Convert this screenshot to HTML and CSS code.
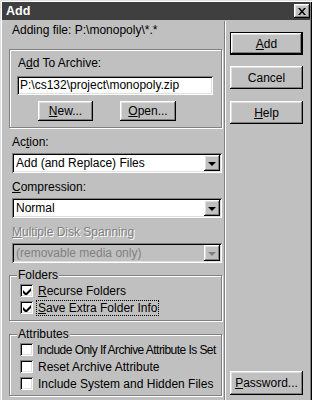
FILE: index.html
```html
<!DOCTYPE html>
<html lang="en">
<head>
  <meta charset="UTF-8" />
  <title>Add</title>
  <link rel="stylesheet" href="styles.css">
</head>
<body>

<div class="window">
  <div class="titlebar">
    <span class="title">Add</span>
    <span class="close">
      <svg width="8" height="7" viewBox="0 0 8 7"><path d="M0 0h2l2 2.5L6 0h2L5 3.5 8 7H6L4 4.5 2 7H0l3-3.5z" fill="#000"/></svg>
    </span>
  </div>

  <div class="main">
    <div class="panel">
      <div class="info">Adding file: P:\monopoly\*.*</div>

      <div class="box">
        <div class="box-label">A<u>d</u>d To Archive:</div>
        <div class="field">P:\cs132\project\monopoly.zip</div>
        <div class="box-buttons">
          <button class="btn btn-new"><u>N</u>ew...</button>
          <button class="btn btn-open"><u>O</u>pen...</button>
        </div>
      </div>

      <div class="field-label">Ac<u>t</u>ion:</div>
      <div class="combo">
        <span class="combo-text">Add (and Replace) Files</span>
        <span class="combo-arrow"><i class="tri"></i></span>
      </div>

      <div class="field-label"><u>C</u>ompression:</div>
      <div class="combo">
        <span class="combo-text">Normal</span>
        <span class="combo-arrow"><i class="tri"></i></span>
      </div>

      <div class="field-label disabled"><u>M</u>ultiple Disk Spanning</div>
      <div class="combo combo-disabled">
        <span class="combo-text">(removable media only)</span>
        <span class="combo-arrow"><i class="tri"></i></span>
      </div>

      <div class="group group-folders">
        <div class="legend">Folders</div>
        <div class="check-row">
          <span class="check checked"><svg width="8" height="8" viewBox="0 0 8 8"><path d="M0 3v3l2.5 2.5h1L8 4V1L3 6z" fill="#000"/></svg></span>
          <span class="check-text"><u>R</u>ecurse Folders</span>
        </div>
        <div class="check-row">
          <span class="check checked"><svg width="8" height="8" viewBox="0 0 8 8"><path d="M0 3v3l2.5 2.5h1L8 4V1L3 6z" fill="#000"/></svg></span>
          <span class="check-text focus"><u>S</u>ave Extra Folder Info</span>
        </div>
      </div>

      <div class="group group-attrs">
        <div class="legend">Attributes</div>
        <div class="check-row">
          <span class="check"></span>
          <span class="check-text tight">Include Only If Archive Attribute Is Set</span>
        </div>
        <div class="check-row">
          <span class="check"></span>
          <span class="check-text">Reset Archive Attribute</span>
        </div>
        <div class="check-row">
          <span class="check"></span>
          <span class="check-text">Include System and Hidden Files</span>
        </div>
      </div>
    </div>

    <div class="actions">
      <button class="btn btn-default"><u>A</u>dd</button>
      <button class="btn btn-cancel">Cancel</button>
      <button class="btn btn-help"><u>H</u>elp</button>
      <button class="btn btn-password"><u>P</u>assword...</button>
    </div>
  </div>
</div>

</body>
</html>
```

FILE: styles.css
```css
* {
  box-sizing: border-box;
}

body {
  margin: 0;
  background: #c0c0c0;
  font-family: "Liberation Sans", Arial, sans-serif;
  font-size: 12px;
  color: #000;
  white-space: nowrap;
}

u {
  text-decoration: underline;
  text-underline-offset: 1px;
}

.window {
  width: 312px;
  height: 420px;
  padding: 2px;
  background: #c0c0c0;
  box-shadow: inset 1px 1px #dfdfdf, inset 2px 2px #fff, inset -1px -1px #000, inset -2px -2px #808080;
  overflow: hidden;
}

/* title bar */
.titlebar {
  height: 18px;
  margin-bottom: 1px;
  padding: 0 0 0 4px;
  display: flex;
  align-items: center;
  justify-content: space-between;
  background: #3f3f3f;
}

.title {
  color: #fff;
  font-weight: bold;
  font-size: 12.5px;
}

.close {
  width: 16px;
  height: 14px;
  display: flex;
  align-items: center;
  justify-content: center;
  background: #c0c0c0;
  box-shadow: inset -1px -1px #000, inset 1px 1px #fff, inset -2px -2px #808080, inset 2px 2px #dfdfdf;
}

/* layout */
.main {
  display: flex;
}

.panel {
  width: 223px;
  padding: 2px 2px 6px 7px;
  border-right: 1px solid #808080;
  box-shadow: 1px 0 #fff;
}

.actions {
  width: 73px;
  margin-left: 5px;
  padding: 11px 0 7px;
  display: flex;
  flex-direction: column;
}

.info {
  height: 14px;
  line-height: 14px;
  margin-left: 3px;
}

/* archive box */
.box {
  margin: 12px 0 2px;
  padding: 6px 7px;
  border: 1px solid #808080;
  box-shadow: inset 1px 1px #fff, 1px 1px #fff;
}

.box-label {
  height: 14px;
  line-height: 14px;
  margin-left: 1px;
}

.field {
  width: 196px;
  height: 19px;
  margin-top: 6px;
  padding: 0 3px;
  line-height: 19px;
  background: #fff;
  box-shadow: inset 1px 1px #808080, inset -1px -1px #fff, inset 2px 2px #000, inset -2px -2px #dfdfdf;
}

.box-buttons {
  display: flex;
  margin-top: 6px;
}

/* buttons */
.btn {
  height: 23px;
  padding: 0;
  border: none;
  background: #c0c0c0;
  font: inherit;
  color: #000;
  box-shadow: inset -1px -1px #000, inset 1px 1px #fff, inset -2px -2px #808080, inset 2px 2px #dfdfdf;
}

.btn-new {
  width: 55px;
  height: 20px;
  margin-left: 21px;
}

.btn-open {
  width: 56px;
  height: 20px;
  margin-left: 27px;
}

.btn-default {
  border: 1px solid #000;
}

.btn-cancel {
  margin-top: 11px;
}

.btn-help {
  margin-top: 12px;
}

.btn-password {
  height: 24px;
  margin-top: auto;
}

/* combos */
.field-label {
  height: 14px;
  line-height: 14px;
  margin: 7px 0 4px 3px;
}

.field-label.disabled {
  color: #808080;
  text-shadow: 1px 1px #fff;
}

.combo {
  width: 210px;
  height: 20px;
  margin-left: 3px;
  padding: 2px;
  display: flex;
  align-items: center;
  background: #fff;
  box-shadow: inset 1px 1px #808080, inset -1px -1px #fff, inset 2px 2px #000, inset -2px -2px #dfdfdf;
}

.combo-text {
  flex: 1;
  padding-left: 2px;
}

.combo-arrow {
  width: 16px;
  height: 16px;
  display: flex;
  align-items: center;
  justify-content: center;
  background: #c0c0c0;
  box-shadow: inset -1px -1px #000, inset 1px 1px #fff, inset -2px -2px #808080, inset 2px 2px #dfdfdf;
}

.tri {
  width: 0;
  height: 0;
  border-left: 4px solid transparent;
  border-right: 4px solid transparent;
  border-top: 4px solid #000;
  margin-top: 1px;
}

.combo-disabled {
  background: #c0c0c0;
}

.combo-disabled .combo-text {
  color: #808080;
}

.combo-disabled .tri {
  border-top-color: #808080;
}

/* group boxes */
.group {
  padding-bottom: 4px;
  border: 1px solid #808080;
  box-shadow: inset 1px 1px #fff, 1px 1px #fff;
}

.group-folders {
  margin-top: 12px;
}

.group-attrs {
  margin-top: 13px;
  padding-bottom: 3px;
}

.legend {
  display: table;
  height: 14px;
  line-height: 14px;
  margin: -8px 0 0 7px;
  padding: 0 1px;
  background: #c0c0c0;
}

.check-row {
  height: 17px;
  padding-left: 10px;
  display: flex;
  align-items: center;
}

.check {
  width: 13px;
  height: 13px;
  flex: none;
  display: flex;
  align-items: center;
  justify-content: center;
  background: #fff;
  box-shadow: inset 1px 1px #808080, inset -1px -1px #fff, inset 2px 2px #000, inset -2px -2px #dfdfdf;
}

.check-text {
  margin-left: 5px;
  line-height: 14px;
}

.check-text.tight {
  margin-left: 4px;
  letter-spacing: -0.55px;
}

.check-text.focus {
  outline: 1px dotted #000;
  padding: 0 1px;
  margin-left: 4px;
}
```
